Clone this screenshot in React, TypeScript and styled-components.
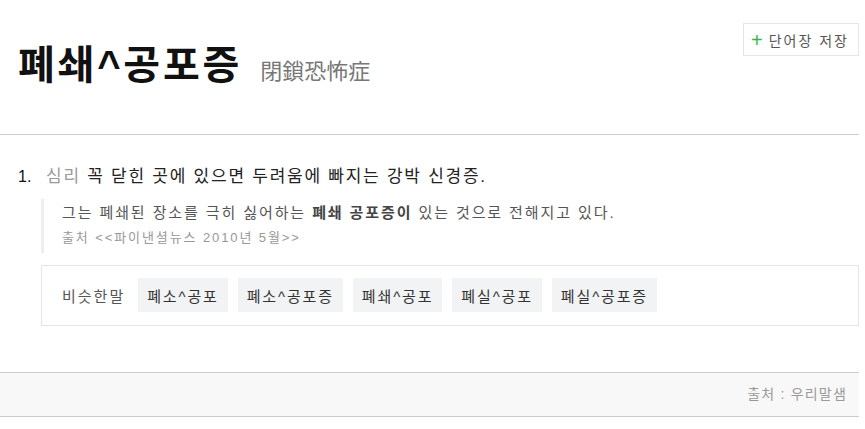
import React from "react";
import styled, { createGlobalStyle } from "styled-components";

const GlobalStyle = createGlobalStyle`
  html, body {
    margin: 0;
    padding: 0;
    background: #fff;
  }
  body {
    font-family: "Liberation Sans", "Noto Sans CJK KR", sans-serif;
    color: #222;
  }
`;

const synonyms = ["폐소^공포", "폐소^공포증", "폐쇄^공포", "폐실^공포", "폐실^공포증"];

function App() {
  return (
    <>
      <GlobalStyle />
      <Page>
        <Header>
          <TitleRow>
            <Title>폐쇄^공포증</Title>
            <Hanja>閉鎖恐怖症</Hanja>
          </TitleRow>
          <SaveButton>
            <Plus>+</Plus>
            단어장 저장
          </SaveButton>
        </Header>

        <Body>
          <DefItem>
            <Num>1.</Num>
            <DefText>
              <Category>심리</Category> 꼭 닫힌 곳에 있으면 두려움에 빠지는 강박 신경증.
            </DefText>
          </DefItem>

          <Quote>
            <QuoteText>
              그는 폐쇄된 장소를 극히 싫어하는 <b>폐쇄 공포증이</b> 있는 것으로 전해지고 있다.
            </QuoteText>
            <QuoteSource>출처 &lt;&lt;파이낸셜뉴스 2010년 5월&gt;&gt;</QuoteSource>
          </Quote>

          <SynBox>
            <SynLabel>비슷한말</SynLabel>
            <TagList>
              {synonyms.map((s) => (
                <Tag key={s}>{s}</Tag>
              ))}
            </TagList>
          </SynBox>
        </Body>

        <Footer>출처 : 우리말샘</Footer>
      </Page>
    </>
  );
}

export default App;

const Page = styled.div`
  width: 859px;
`;

const Header = styled.div`
  display: flex;
  justify-content: space-between;
  align-items: flex-start;
  height: 111px;
  padding: 23px 0 0 18px;
  border-bottom: 1px solid #ccc;
`;

const TitleRow = styled.div`
  display: flex;
  align-items: baseline;
  gap: 18px;
  margin-top: 17px;
`;

const Title = styled.h1`
  margin: 0;
  font-size: 40px;
  font-weight: 700;
  color: #111;
  line-height: 50px;
  letter-spacing: 2.8px;
`;

const Hanja = styled.span`
  font-size: 22px;
  color: #777;
`;

const SaveButton = styled.button`
  display: flex;
  align-items: center;
  gap: 4px;
  height: 33px;
  padding: 0 9px 0 7px;
  border: 1px solid #e5e5e5;
  background: #fff;
  font-family: inherit;
  font-size: 14px;
  letter-spacing: 2px;
  color: #555;
  cursor: pointer;
`;

const Plus = styled.span`
  color: #3bb54a;
  font-size: 20px;
  font-weight: 300;
  line-height: 1;
`;

const Body = styled.div`
  padding: 30px 0 46px 0;
`;

const DefItem = styled.div`
  display: flex;
  align-items: baseline;
  padding-left: 18px;
  font-size: 17px;
  line-height: 24px;
`;

const Num = styled.span`
  width: 28px;
  color: #111;
  font-size: 16px;
`;

const DefText = styled.span`
  color: #222;
  letter-spacing: 1.75px;
`;

const Category = styled.span`
  color: #999;
`;

const Quote = styled.div`
  margin: 10px 0 0 41px;
  padding: 2px 0 2px 18px;
  border-left: 3px solid #eee;
`;

const QuoteText = styled.div`
  font-size: 15px;
  color: #555;
  line-height: 24px;
  letter-spacing: 1.9px;

  b {
    color: #444;
  }
`;

const QuoteSource = styled.div`
  font-size: 13px;
  color: #999;
  line-height: 26px;
  letter-spacing: 1.9px;
`;

const SynBox = styled.div`
  display: flex;
  align-items: center;
  gap: 13px;
  margin: 12px 0 0 41px;
  padding: 12px 20px 13px;
  border: 1px solid #e5e5e5;
`;

const SynLabel = styled.span`
  font-size: 15px;
  color: #555;
  letter-spacing: 2px;
`;

const TagList = styled.div`
  display: flex;
  gap: 10px;
`;

const Tag = styled.span`
  display: flex;
  align-items: center;
  height: 34px;
  padding: 0 9px;
  background: #f2f3f4;
  font-size: 15px;
  color: #333;
  letter-spacing: 1.85px;
`;

const Footer = styled.div`
  height: 43px;
  line-height: 43px;
  padding-right: 12px;
  text-align: right;
  background: #f8f8f8;
  border-top: 1px solid #ccc;
  border-bottom: 1px solid #ccc;
  font-size: 14px;
  letter-spacing: 1.2px;
  color: #999;
`;
